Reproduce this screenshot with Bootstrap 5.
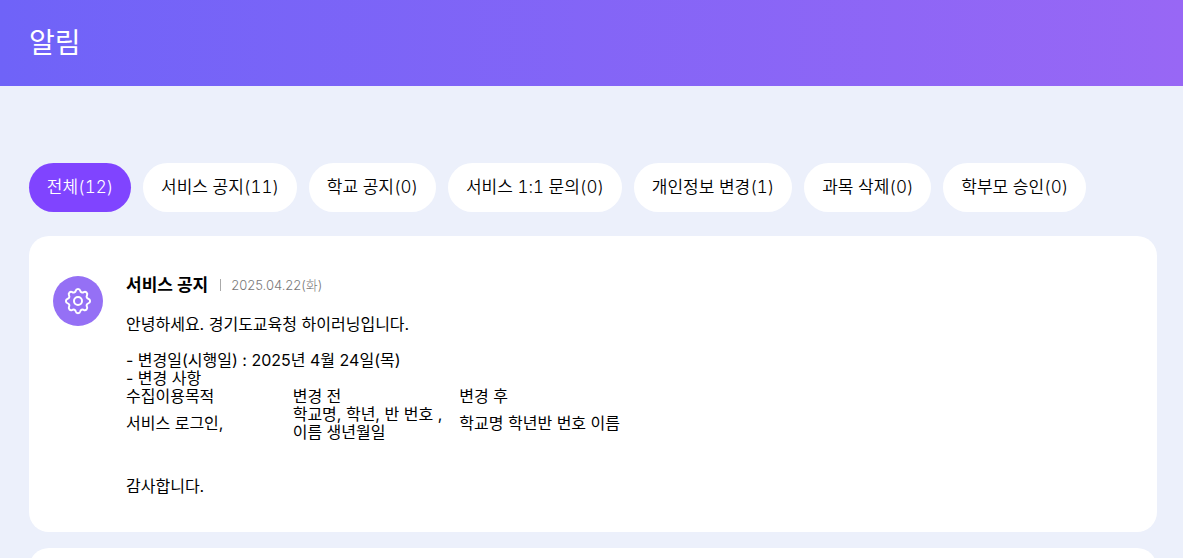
<!DOCTYPE html>
<html lang="ko">
<head>
<meta charset="utf-8">
<title>알림</title>
<link href="https://cdn.jsdelivr.net/npm/bootstrap@5.3.0/dist/css/bootstrap.min.css" rel="stylesheet">
<style>
html,body{height:558px;overflow:hidden}
body{background:#ecf0fb;font-family:Inter,"Noto Sans CJK KR",sans-serif;font-size:16px;color:#000}
.top-band{height:86px;padding:0 0 0 29px;background:linear-gradient(90deg,#6f63f8,#9867f5)}
.top-title{font-size:28px;font-weight:400;color:#fff;margin:0;line-height:1}
.tab-row{padding:77px 29px 0;gap:12px}
.tab-pill{height:49px;padding:0 17.85px;border-radius:25px;background:#fff;color:#000;font-size:17px;font-weight:350;border:0;white-space:nowrap;font-feature-settings:"tnum" 1}
.tab-pill.is-on{background:#8044ff;color:#fff}
.note-card{margin:24px 26px 0 29px;border-radius:20px;background:#fff;border:0;padding:40px 24px 37px}
.note-card+.note-card{margin-top:16px;height:60px}
.note-icon{width:50px;height:50px;border-radius:50%;background:#9570f5;flex:none;margin-right:23px}
.note-head{height:18px;line-height:18px}
.note-kind{font-weight:700;font-size:17px}
.note-sep{width:1px;height:12px;background:#aaa;margin:0 11px 0 12px}
.note-date{font-size:13px;font-weight:300;color:#777;margin-left:-1px}
.note-body{line-height:18px;margin-top:21px}
.note-body p{margin:0}
.gap-a{margin-top:18px!important}
.gap-b{margin-top:36px!important}
.change-tb{width:500px;border-collapse:collapse;table-layout:fixed}
.change-tb td{padding:0;vertical-align:middle}
</style>
</head>
<body>
<header class="top-band d-flex align-items-center"><h1 class="top-title">알림</h1></header>
<nav class="tab-row d-flex">
<button class="tab-pill is-on">전체(12)</button>
<button class="tab-pill">서비스 공지(11)</button>
<button class="tab-pill">학교 공지(0)</button>
<button class="tab-pill">서비스 1:1 문의(0)</button>
<button class="tab-pill">개인정보 변경(1)</button>
<button class="tab-pill">과목 삭제(0)</button>
<button class="tab-pill">학부모 승인(0)</button>
</nav>
<section class="card note-card">
<div class="d-flex">
<div class="note-icon d-flex align-items-center justify-content-center">
<svg width="32" height="32" viewBox="0 0 24 24" fill="none" stroke="#fff" stroke-width="1.5" stroke-linecap="round" stroke-linejoin="round"><path d="M10.3 4.3c.4-1.800 3-1.800 3.400 0a1.700 1.700 0 0 0 2.600 1.100c1.500-.9 3.300.8 2.400 2.400a1.700 1.700 0 0 0 1 2.500c1.800.5 1.800 3 0 3.500a1.700 1.700 0 0 0-1 2.500c.9 1.600-.9 3.300-2.400 2.400a1.700 1.700 0 0 0-2.600 1.100c-.4 1.800-3 1.800-3.400 0a1.700 1.700 0 0 0-2.600-1.100c-1.500.9-3.300-.8-2.400-2.400a1.700 1.700 0 0 0-1-2.500c-1.800-.5-1.800-3 0-3.500a1.700 1.700 0 0 0 1-2.500c-.9-1.600.9-3.300 2.400-2.400a1.700 1.700 0 0 0 2.600-1.100z"/><circle cx="12" cy="12" r="3"/></svg>
</div>
<div class="flex-grow-1">
<div class="note-head d-flex align-items-center"><span class="note-kind">서비스 공지</span><span class="note-sep"></span><span class="note-date">2025.04.22(화)</span></div>
<div class="note-body">
<p>안녕하세요. 경기도교육청 하이러닝입니다.</p>
<p class="gap-a">- 변경일(시행일) : 2025년 4월 24일(목)</p>
<p>- 변경 사항</p>
<table class="change-tb">
<tr><td>수집이용목적</td><td>변경 전</td><td>변경 후</td></tr>
<tr><td>서비스 로그인,</td><td>학교명, 학년, 반 번호 ,<br>이름 생년월일</td><td>학교명 학년반 번호 이름</td></tr>
</table>
<p class="gap-b">감사합니다.</p>
</div>
</div>
</div>
</section>
<section class="card note-card"></section>
</body>
</html>
